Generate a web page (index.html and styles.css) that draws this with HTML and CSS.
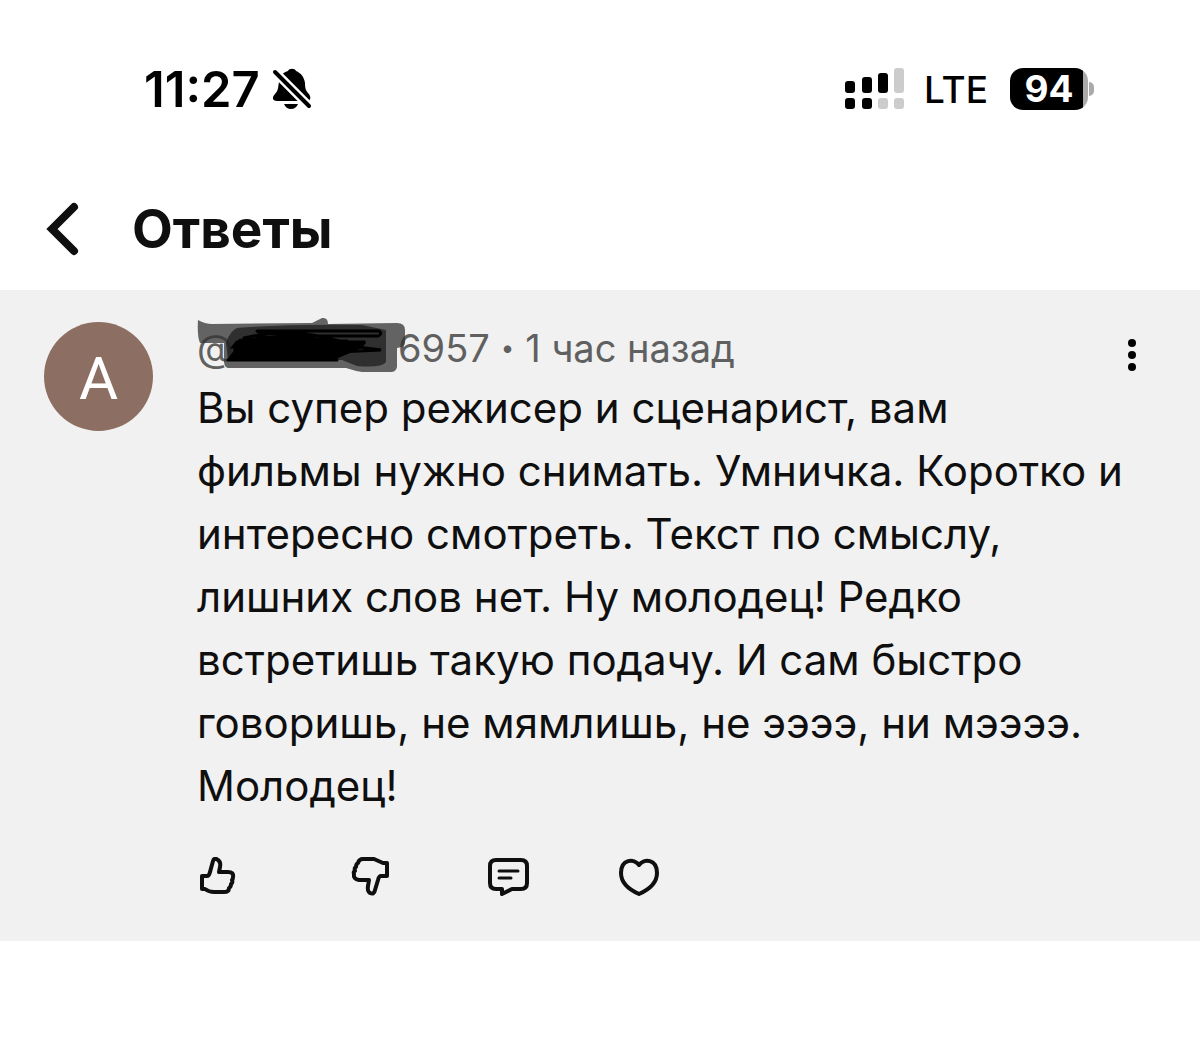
FILE: index.html
```html
<!DOCTYPE html>
<html lang="ru">
<head>
  <meta charset="UTF-8" />
  <meta name="viewport" content="width=device-width, initial-scale=1.0" />
  <title>Ответы</title>
  <link rel="stylesheet" href="styles.css">
</head>
<body>
  <div class="status-bar">
    <div class="status-left">
      <span class="time">11:27</span>
      <svg class="bell" width="40" height="42" viewBox="0 0 40 42">
        <path d="M5 33C0 33 0 29 3 26C6 23 6 20 7 14C8 7 12 4 16 3C17 0 23 0 24 3C29 5 32 9 33 15C33 21 34 23 37 26C39 29 39 33 35 33Z" />
        <path d="M12 36H26C25 39 22 41 19 41C16 41 13 39 12 36Z" />
        <path class="bell-gap" d="M3 4L37 38" />
        <path class="bell-slash" d="M3 4L37 38" />
      </svg>
    </div>
    <div class="status-right">
      <svg class="signal" width="60" height="42" viewBox="0 0 60 42">
        <rect x="0" y="13" width="10" height="12" rx="3" />
        <rect x="17" y="9" width="10" height="16" rx="3" />
        <rect x="33" y="5" width="10" height="20" rx="3" />
        <rect class="off" x="49" y="0" width="10" height="25" rx="3" />
        <rect x="0" y="30" width="10" height="11" rx="3" />
        <rect x="17" y="30" width="10" height="11" rx="3" />
        <rect class="off" x="33" y="30" width="10" height="11" rx="3" />
        <rect class="off" x="49" y="30" width="10" height="11" rx="3" />
      </svg>
      <span class="network">LTE</span>
      <span class="battery">94</span>
    </div>
  </div>

  <header>
    <button class="back" type="button" aria-label="Назад">
      <svg width="34" height="54" viewBox="0 0 34 54">
        <path d="M28 5L6 27L28 49" />
      </svg>
    </button>
    <h1>Ответы</h1>
  </header>

  <main class="comment">
    <div class="avatar">A</div>
    <div class="comment-body">
      <div class="meta">
        <span class="at">@</span><span>6957</span><span class="dot">•</span><span>1 час назад</span>
        <!-- marker strokes over the user name -->
        <svg class="marker" width="210" height="58" viewBox="0 0 210 58">
          <path class="marker-light" d="M1 4Q8 8 15 8L115 7L125 2Q131 1 131 8L200 7Q208 7 208 14V27Q208 31 200 32V51Q199 56 194 56H165Q158 55 149 52H31Q27 51 27 45V27H3Q0 20 1 4Z" />
          <path class="marker-dark" d="M40 12Q90 8 165 9L189 14V46Q185 52 160 50L145 44H31L29 27Q33 15 40 12Z" />
          <path class="marker-line" d="M60 15H182Q186 18 181 20H100L61 16M47 22Q90 12 130 22T167 26H40L36 31H166M40 36Q100 22 184 34L120 37H37L34 41H140M31 44H140M42 27L150 25M60 20L150 35L38 33M50 40L165 29" />
          <path class="marker-fill" d="M42 23L90 18L150 25L167 31L139 43H34L38 29Z" />
        </svg>
      </div>
      <p class="text">Вы супер режисер и сценарист, вам<br>
        фильмы нужно снимать. Умничка. Коротко и<br>
        интересно смотреть. Текст по смыслу,<br>
        лишних слов нет. Ну молодец! Редко<br>
        встретишь такую подачу. И сам быстро<br>
        говоришь, не мямлишь, не ээээ, ни мээээ.<br>
        Молодец!</p>
      <div class="actions">
        <button class="like" type="button" aria-label="Нравится">
          <svg width="42" height="42" viewBox="0 0 42 42">
            <path d="M5 19H10Q12 19 13 15L16 4Q17 0 21 3Q24 5 23 10L22 15H31Q37 15 36 20Q36 22 35 23Q36 26 34 27Q34 30 32 31Q32 35 27 35H17Q12 35 8 32H5Z" />
          </svg>
        </button>
        <button class="dislike" type="button" aria-label="Не нравится">
          <svg width="42" height="42" viewBox="0 0 42 42">
            <path d="M37 6V19H31Q29 19 28 23L25 33Q24 38 20 36Q17 34 18 29L19 23H9Q3 22 4 17Q3 15 5 14Q4 11 6 10Q6 7 8 6Q9 2 13 2H24L33 6Z" />
          </svg>
        </button>
        <button class="reply" type="button" aria-label="Ответить">
          <svg width="42" height="42" viewBox="0 0 42 42">
            <path d="M8 3H33Q39 3 39 9V26Q39 32 33 32H24L14 37V32H8Q2 32 2 26V9Q2 3 8 3Z" />
            <path class="thin" d="M11 14H30M11 21H23" />
          </svg>
        </button>
        <button class="heart" type="button" aria-label="Сердечко">
          <svg width="42" height="42" viewBox="0 0 42 42">
            <path d="M21 8C16 1 3 2 3 16C3 26 12 33 21 37C30 33 39 26 39 16C39 2 26 1 21 8Z" />
          </svg>
        </button>
      </div>
    </div>
    <button class="menu" type="button" aria-label="Ещё">
      <svg width="10" height="34" viewBox="0 0 10 34">
        <circle cx="5" cy="5" r="4" />
        <circle cx="5" cy="17" r="4" />
        <circle cx="5" cy="29" r="4" />
      </svg>
    </button>
  </main>
</body>
</html>
```
FILE: styles.css
```css
* {
  box-sizing: border-box;
}

body {
  margin: 0;
  background: #fff;
  color: #0f0f0f;
  font-family: Inter, "Liberation Sans", sans-serif;
}

button {
  display: flex;
  padding: 0;
  border: 0;
  background: none;
  cursor: pointer;
}

.status-bar {
  display: flex;
  justify-content: space-between;
  align-items: center;
  height: 178px;
  padding: 0 112px 0 144px;
  color: #000;
}

.status-left,
.status-right {
  display: flex;
  align-items: center;
}

.status-left {
  gap: 12px;
}

.time {
  font-size: 49px;
  font-weight: 600;
}

.bell-gap,
.bell-slash {
  stroke: #000;
  stroke-width: 4;
  stroke-linecap: round;
}

.bell-gap {
  stroke: #fff;
  stroke-width: 9;
}

.network {
  margin: 0 22px 0 19px;
  font-size: 37px;
  font-weight: 500;
}

.off {
  fill: #ccc;
}

.battery {
  position: relative;
  width: 78px;
  border-radius: 13px;
  background: linear-gradient(90deg, #000 73px, #aaa 73px);
  color: #fff;
  font-size: 37px;
  font-weight: 700;
  line-height: 42px;
  text-align: center;
}

.battery::after {
  content: "";
  position: absolute;
  top: 14px;
  right: -6px;
  width: 5px;
  height: 14px;
  border-radius: 0 5px 5px 0;
  background: #aaa;
}

header {
  display: flex;
  align-items: center;
  gap: 52px;
  height: 112px;
  padding: 0 46px 10px;
}

.back path {
  fill: none;
  stroke: #0f0f0f;
  stroke-width: 8;
  stroke-linecap: round;
}

h1 {
  margin: 0;
  font-size: 53px;
  font-weight: 700;
}

.comment {
  display: flex;
  align-items: flex-start;
  padding: 32px 63px 42px 44px;
  background: #f1f1f1;
}

.avatar {
  flex: none;
  width: 109px;
  height: 109px;
  margin-right: 44px;
  border-radius: 50%;
  background: #8d6e63;
  color: #fff;
  font-family: Roboto, sans-serif;
  font-size: 60px;
  line-height: 113px;
  text-align: center;
}

.comment-body {
  flex: 1;
}

.meta {
  position: relative;
  display: flex;
  height: 54px;
  color: #606060;
  font-size: 38px;
  line-height: 52px;
}

.at {
  width: 201px;
}

.dot {
  margin: 0 11px;
  font-size: 24px;
}

.marker {
  position: absolute;
  top: -6px;
  left: 0;
}

.marker-light {
  fill: #333;
  fill-opacity: 0.75;
}

.marker-dark {
  fill: #222;
  fill-opacity: 0.8;
}

.marker-line {
  fill: none;
  stroke: #000;
  stroke-width: 3;
  stroke-linecap: round;
}

.text {
  margin: 0;
  font-size: 42px;
  line-height: 63px;
  white-space: nowrap;
}

.actions {
  display: flex;
  margin-top: 40px;
}

.actions path {
  fill: none;
  stroke: #0f0f0f;
  stroke-width: 4;
  stroke-linejoin: round;
  stroke-linecap: round;
}

.dislike {
  margin-left: 111px;
}

.reply {
  margin-left: 96px;
}

.heart {
  margin-left: 88px;
}

.actions .thin {
  stroke-width: 3;
}

.menu {
  margin-top: 16px;
}
```
